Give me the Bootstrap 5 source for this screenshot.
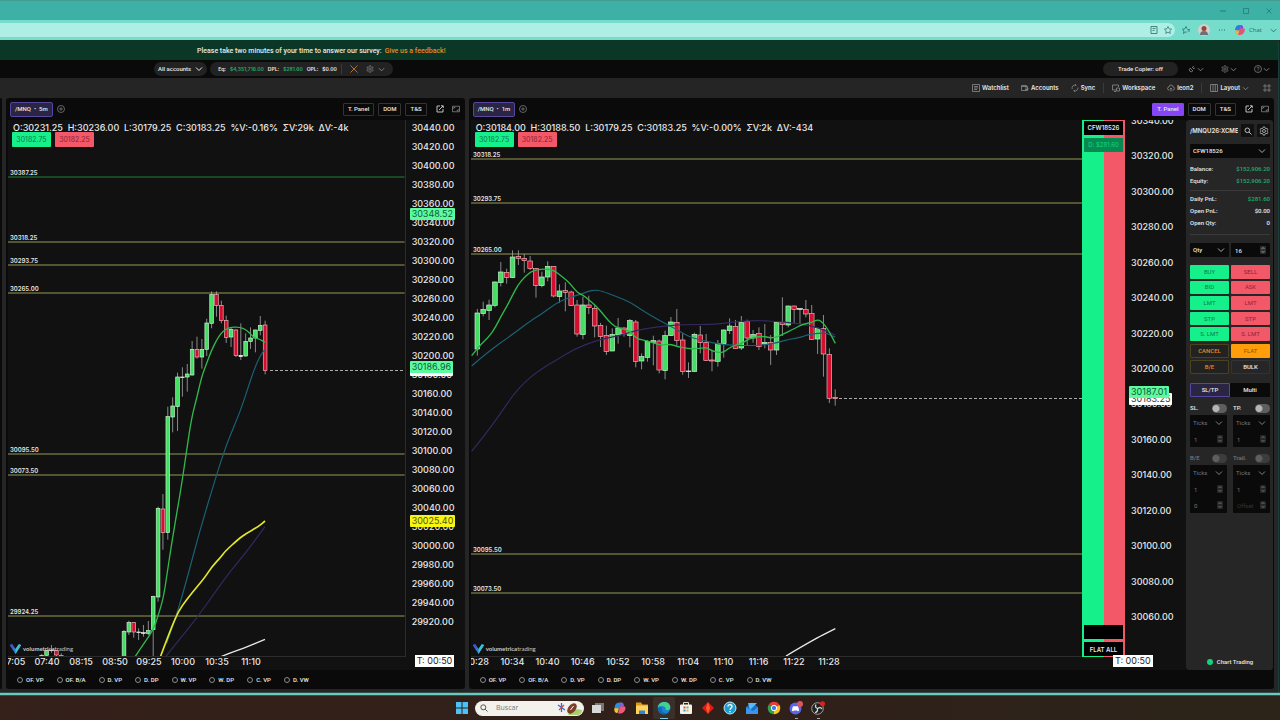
<!DOCTYPE html>
<html lang="en">
<head>
<meta charset="utf-8">
<meta name="viewport" content="width=device-width, initial-scale=1">
<title>Chart Trading</title>
<link href="https://cdn.jsdelivr.net/npm/bootstrap@5.3.0/dist/css/bootstrap.min.css" rel="stylesheet">
<style>
  :root { --sm: 6px; --lg: 9px; --ink: #e8e8e8; --panel: #0a0a0a; --up: #16f08b; --down: #f25868; }
  body { font-family: Inter, "Liberation Sans", sans-serif; font-size: var(--sm); line-height: 8px; font-weight: 600; color: var(--ink); background: #2e2019; }
  button, input, select { font: inherit; color: inherit; }
  svg { display: block; flex: none; fill: none; stroke: currentColor; }
  ul { list-style: none; margin: 0; padding: 0; }
  .i8 { width: 8px; height: 8px; } .i10 { width: 10px; height: 10px; } .i16 { width: 14px; height: 14px; stroke: none; }
  .chev { width: 7px; height: 7px; }
  .bare { border: 0; background: none; padding: 0; display: flex; align-items: center; white-space: nowrap; }
  .survey, .accounts, .pane-head, .studies, .ticket { font-family: Roboto, "Liberation Sans", sans-serif; font-weight: 500; }

  .titlebar { height: 20px; background: #3db1a6; border-top: 1px solid #469c92; color: #2a7a72; padding-right: 7px; gap: 15px; }
  .addressbar { height: 20px; background: #76dccb; color: #2c6a66; padding-right: 3px; gap: 7px; }
  .address { height: 14px; background: #aeeee5; border-radius: 0 7px 7px 0; padding-right: 3px; gap: 6px; }
  .address input { border: 0; background: none; outline: 0; height: 12px; min-width: 0; }
  .browser-actions { gap: 8px; }
  .chat { font: 6px/10px "Open Sans", sans-serif; gap: 3px; }
  .avatar { width: 12px; height: 12px; stroke: none; }

  .app { background: #252525; margin-right: 1px; border-right: 1px solid #1a3f3a; border-top-right-radius: 3px; overflow: hidden; }
  .survey { height: 20px; background: #0b3826; padding: 2px 0 0 197px; gap: 3px; font-size: 7px; }
  .survey a { color: #e58a24; text-decoration: none; }
  .accounts { height: 18px; background: var(--panel); padding: 0 8px 0 154px; gap: 3px; }
  .pill { height: 14px; background: #222; border-radius: 7px; color: var(--ink); padding: 0 4px; }
  .totals { padding: 0 8px; gap: 4px; font: 600 5px/8px Inter, sans-serif; }
  .copier { padding: 0 15px; }
  .menus { gap: 17px; margin-left: 7px; } .menus .bare { gap: 1px; }
  .gain { color: #1fae6c; }
  .orange { color: #c07a2a; }
  .tools { height: 20px; gap: 8px; padding-right: 7px; }
  .tools .bare { gap: 2px; }
  .tools .fit { margin-left: 6px; }
  .rule { width: 1px; height: 10px; background: #3a3a3a; }
  .muted { color: #8b8b8b; }

  .work { gap: 4px; padding: 0 4px 3px 0; }
  .pane { background: var(--panel); border-radius: 3px; overflow: hidden; min-width: 0; }
  .sliver { width: 2px; }
  .pane-left { flex: 0 0 36%; }
  .pane-head { height: 22px; padding: 0 5px 0 4px; gap: 4px; }
  .pop { margin-left: 5px; }
  .symbol { height: 15px; border: 1px solid #5646a0; border-radius: 2px; background: #2a2542; color: var(--ink); padding: 0 4px; }
  .tag { height: 13px; border: 1px solid #333; border-radius: 1px; background: #0a0a0a; color: var(--ink); padding: 0 4px; }
  .tag.on { background: #8547f5; border-color: #8547f5; }

  .chart { display: grid; grid-template-columns: minmax(0,1fr) auto auto; grid-template-rows: minmax(537px,1fr) 13px; background: #111; margin-left: 2px; min-width: 0; }
  .plot { position: relative; border-bottom: 1px solid #2c2c2c; overflow: hidden; }
  .plot > svg { position: absolute; inset: 0; width: 100%; height: 100%; }
  .plot text { fill: #e4e4e4; stroke: none; font-size: var(--sm); font-weight: 600; }
  .quote { position: absolute; top: 2px; left: 5px; font-size: var(--lg); line-height: 11px; font-weight: 500; white-space: pre; }
  .bidask { position: absolute; top: 12px; left: 4px; gap: 4px; font-size: 7px; font-weight: 400; }
  .bidask button { border: 0; border-radius: 1px; height: 15px; width: 39px; padding: 0; }
  .bid { background: var(--up); color: #0b7a48; } .ask { background: var(--down); color: #8c2433; }
  .brand { position: absolute; left: 1px; bottom: 1px; gap: 1px; font-family: Lato, sans-serif; font-size: var(--sm); color: #c9c9c9; font-weight: 400; }
  .axis { position: relative; border-left: 1px solid #2c2c2c; font-size: var(--lg); font-weight: 500; overflow: hidden; }
  .axis li { flex: 1; display: flex; align-items: center; padding-left: 6px; }
  .axis-left { width: 60px; } .axis-left ul { height: 513px; margin-top: -2px; }
  .axis-right { width: 61px; } .axis-right ul { height: 532px; margin-top: -17px; }
  .price { position: absolute; left: 4px; padding: 0 2px; height: 12px; line-height: 12px; border-radius: 1px; font-weight: 400; background: #5dfba0; color: #0c5c34; }
  .price.last { background: #fff; color: #333; } .price.avg { background: #f6f615; color: #55550a; }
  .times { grid-column: 1 / span 2; overflow: hidden; font-size: var(--lg); font-weight: 500; line-height: 9px; }
  .times ul { display: grid; grid-auto-flow: column; grid-auto-columns: 1fr; text-align: center; }
  .times-left ul { width: 272px; margin-left: -12px; } .times-right ul { width: 387px; margin-left: -11px; }
  .clock-cell { position: relative; grid-column: 3; }
  .clock { position: absolute; top: -2px; left: 10px; background: #fff; color: #222; font-size: var(--lg); font-weight: 400; line-height: 12px; padding: 0 2px; white-space: nowrap; }
  .times-right + .clock-cell .clock { left: -12px; }
  .strip { width: 43px; background: linear-gradient(90deg, var(--up) 50%, var(--down) 50%); padding: 1px 2px; gap: 3px; text-align: center; }
  .strip > * { background: #000; border: 0; height: 14px; line-height: 13px; padding: 0; display: block; color: var(--ink); white-space: nowrap; }
  .strip .day { background: #078a50; color: #15d882; font-weight: 400; }
  .studies { height: 19px; padding-left: 11px; gap: 13px; }
  .studies label { display: flex; align-items: center; gap: 3px; white-space: nowrap; }
  .studies input { appearance: none; width: 6px; height: 6px; margin: 0; border: 1px solid #8a8a8a; border-radius: 50%; }

  .ticket { width: 87px; background: #262626; border-radius: 3px; margin-right: 1px; padding: 4px 3px 4px 4px; }
  .ticket .btn2 { border: 0; border-radius: 1px; height: 14px; padding: 0; background: #161616; }
  .ticket-head { margin-bottom: 7px; gap: 3px; }
  .sq { width: 13px; height: 13px; padding: 0; border: 0; background: #111; border-radius: 1px; display: grid; place-items: center; color: #bbb; flex: none; }
  .sym { font: 600 6px/8px Inter, sans-serif; white-space: nowrap; overflow: hidden; }
  .pick { appearance: none; border: 0; border-radius: 1px; height: 14px; width: 100%; padding: 0 3px; min-width: 0; background: #0a0a0a url("data:image/svg+xml,%3Csvg xmlns='http://www.w3.org/2000/svg' viewBox='0 0 8 8'%3E%3Cpath d='M1 2.5 4 5.5 7 2.5' fill='none' stroke='%23bbb' stroke-width='.9'/%3E%3C/svg%3E") no-repeat right 4px center / 8px 8px; }
  .num { appearance: textfield; border: 0; border-radius: 1px; height: 14px; width: 100%; min-width: 0; padding: 0 4px; background: #0a0a0a url("data:image/svg+xml,%3Csvg xmlns='http://www.w3.org/2000/svg' viewBox='0 0 6 8'%3E%3Crect width='6' height='8' rx='1' fill='%23303030'/%3E%3Cpath d='M1.5 3 3 1.5 4.5 3M1.5 5 3 6.5 4.5 5' fill='none' stroke='%23aaa' stroke-width='.8'/%3E%3C/svg%3E") no-repeat right 4px center / 6px 8px; }
  .num::-webkit-inner-spin-button { display: none; }
  .num::placeholder { color: #444; opacity: 1; }
  .two { display: grid; grid-template-columns: 1fr 1fr; gap: 2px; }
  .facts { border-bottom: 1px solid #3a3a3a; margin: 0; padding: 5px 0 3px; }
  .facts + .facts { padding: 2px 0 5px; }
  .facts > div { display: flex; justify-content: space-between; height: 12px; align-items: center; }
  .facts dt, .facts dd { margin: 0; font-weight: 500; }
  .orders { height: 76px; grid-auto-rows: 1fr; } .ticket .orders .btn2 { height: auto; }
  .exits { margin-top: 3px; }
  .modes { margin-top: 9px; gap: 0; }
  .ticket .buy { background: var(--up); color: #0b7a48; font-weight: 400; }
  .ticket .sell { background: var(--down); color: #8c2433; font-weight: 400; }
  .ticket .flat { background: #ff9d0a; color: #8a5300; font-weight: 400; }
  .ticket .line { border: 1px solid #4a431d; background: #222; color: #e58a24; }
  .ticket .bulk { border: 1px solid #333; background: #262626; }
  .ticket .sltp { border: 1px solid #5646a0; background: #2a2542; }
  .ticket .multi { background: #0a0a0a; }
  .sets { column-gap: 6px; margin-top: 6px; }
  .box { background: #0a0a0a; border-radius: 1px; color: #999; }
  .box .pick, .box .num { display: block; height: 16px; background-color: transparent; font-weight: 400; opacity: .75; }
  .switch { display: flex; justify-content: space-between; align-items: center; height: 10px; margin: 0; }
  .switch input { appearance: none; width: 15px; height: 9px; margin: 0; border-radius: 5px; background: radial-gradient(circle at 4px 50%, #b5b5b5 3px, transparent 4px) #5e5e5e; }
  .switch.off { color: #777; } .switch.off input { background: radial-gradient(circle at 4px 50%, #5e5e5e 3px, transparent 4px) #3c3c3c; }
  .dot { width: 6px; height: 6px; border-radius: 50%; background: #16d07c; }

  .edge { height: 4px; background: #6cc9bd; border-top: 1px solid #2e4e4b; border-bottom: 1px solid #35504b; }
  .taskbar { height: 24px; padding-left: 3px; background: linear-gradient(90deg, #35201a, #2f2019 60%, #2c2419); }
  .taskbar button { position: relative; width: 22px; height: 22px; border: 0; padding: 0; background: none; display: grid; place-items: center; }
  .taskbar .start { width: 16px; }
  .taskbar .open::after { content: ""; position: absolute; bottom: 0; width: 3px; height: 1px; background: #aaa; }
  .taskbar .active { background: #3b3029; border-radius: 2px; } .taskbar .active::after { width: 8px; background: #7fd0e8; }
  .find { width: 109px; height: 15px; background: #f3f1ec; border-radius: 8px; color: #555; padding: 0 2px 0 5px; margin: 0 3px 0 5px; }
  .find input { border: 0; background: none; outline: 0; min-width: 0; font: 7px/10px "Open Sans", sans-serif; padding: 0; }
  .find input::placeholder { color: #777; opacity: 1; }
  .football { width: 25px; height: 13px; stroke: none; }
</style>
</head>
<body>
<svg width="0" height="0" class="position-absolute" aria-hidden="true">
  <symbol id="down" viewBox="0 0 8 8"><path d="M1 2.5 4 5.5 7 2.5"/></symbol>
  <symbol id="gear" viewBox="0 0 16 16"><path d="M6.8 1.5h2.4l.5 1.9 1.6.9 1.9-.5 1.2 2.1-1.4 1.3v1.7l1.4 1.3-1.2 2.1-1.9-.5-1.6.9-.5 1.9H6.800l-.5-1.900-1.600-.9-1.900.5-1.200-2.100L3 8.900V7.200L1.600 5.900l1.200-2.100 1.900.5 1.600-.9z" stroke-width="1.300"/><circle cx="8" cy="8" r="2.400" stroke-width="1.300"/></symbol>
  <symbol id="plus" viewBox="0 0 16 16"><circle cx="8" cy="8" r="7" stroke-width="1.400"/><path d="M8 4.500v7M4.500 8h7" stroke-width="1.400"/></symbol>
  <symbol id="pop" viewBox="0 0 16 16"><path d="M8 2H2v12h12V8M6 10l8-8M10 1.500h4.500V6" stroke-width="1.600"/></symbol>
  <symbol id="full" viewBox="0 0 16 16"><path d="M1 2.500h14v11H1zM3.500 8V5h3M12.500 8v3h-3" stroke-width="1.500"/></symbol>
  <symbol id="vlogo" viewBox="0 0 16 14"><path d="M1 2l3-1 4 6 4-6 3 1-7 11z" fill="#2d7fd0" stroke="none"/><path d="M12 1l3 1-7 11V7z" fill="#3fc0d0" stroke="none"/><path d="M1 2l3-1 2.500 4-2 2.500z" fill="#4656c8" stroke="none"/></symbol>
</svg>

<div class="d-flex flex-column min-vh-100">
  <div class="titlebar d-flex justify-content-end align-items-center">
    <button class="bare" aria-label="Minimize"><svg class="i8" viewBox="0 0 8 8"><path d="M1 4h6"/></svg></button>
    <button class="bare" aria-label="Maximize"><svg class="i8" viewBox="0 0 8 8"><path d="M1.500 1.500h5v5h-5z" stroke-width=".8"/></svg></button>
    <button class="bare" aria-label="Close"><svg class="i8" viewBox="0 0 8 8"><path d="M1.500 1.500l5 5M6.500 1.500l-5 5" stroke-width=".8"/></svg></button>
  </div>
  <div class="addressbar d-flex align-items-center">
    <div class="address d-flex flex-grow-1 align-items-center">
      <input class="flex-grow-1" aria-label="Address">
      <svg class="i8" viewBox="0 0 8 8"><path d="M1 .5h6v7H1zM2.500 2.500h3M2.500 4.500h2" stroke-width=".8"/></svg>
      <svg class="i8" viewBox="0 0 16 16"><path d="M8 1l2.200 4.600 5 .7-3.600 3.500.9 5L8 12.500 3.500 14.800l.9-5L.8 6.300l5-.7z" stroke-width="1.400"/></svg>
    </div>
    <div class="browser-actions d-flex align-items-center">
      <svg class="i8" viewBox="0 0 16 16"><path d="M9.500 12.500 7 12l-4 3 .9-5L.8 6.300l5-.7L8 1l2.200 4.600M11 7h5M11 10h5" stroke-width="1.500"/></svg>
      <svg class="avatar" viewBox="0 0 12 12"><circle cx="6" cy="6" r="6" fill="#d8cfc8"/><circle cx="6" cy="4.500" r="2.500" fill="#8a4a42"/><path d="M2 11a4 4 0 0 1 8 0" fill="#6c6f78"/></svg>
      <svg class="i8" viewBox="0 0 8 8"><path d="M1 4h1M3.500 4h1M6 4h1" stroke-width="1.200"/></svg>
      <button class="bare chat"><svg class="avatar" viewBox="0 0 12 12"><path d="M1 5.500C2 1 4 .8 7 1L5.500 6.500 3 8z" fill="#2b7de0"/><path d="M6.500 1C9 .8 9 3 9.500 4.500L6 5z" fill="#7a4be0"/><path d="M6 4.500h4.500c1 1.500-.5 6.500-4.500 6.500H4z" fill="#e8507a"/><path d="M1 6l4 .5L4 10.500C2 10.500.5 9 1 6z" fill="#f0b030"/></svg>Chat</button>
      <svg class="chev" viewBox="0 0 8 8"><use href="#down"/></svg>
    </div>
  </div>

  <div class="app d-flex flex-column flex-grow-1">
    <div class="survey d-flex align-items-center"><span>Please take two minutes of your time to answer our survey:</span><a href="#">Give us a feedback!</a></div>

    <div class="accounts d-flex align-items-center">
      <button class="bare pill">All accounts <svg class="i8 ms-1"><use href="#down"/></svg></button>
      <div class="pill totals d-flex align-items-center">
        <span>Eq:</span><span class="gain">$4,351,716.00</span><span>DPL:</span><span class="gain">$281.60</span><span>OPL:</span><span>$0.00</span>
        <span class="rule"></span>
        <button class="bare orange ms-1" aria-label="Close all"><svg class="i8" viewBox="0 0 8 8"><path d="M.5 .5l7 7M7.500 .5l-7 7" stroke-width=".9"/></svg></button>
        <button class="bare muted ms-1" aria-label="Account settings"><svg class="i8"><use href="#gear"/></svg><svg class="chev ms-1"><use href="#down"/></svg></button>
      </div>
      <button class="bare pill copier ms-auto">Trade Copier: off</button>
      <div class="menus d-flex muted">
        <button class="bare" aria-label="Connection"><svg class="i8" viewBox="0 0 8 8"><path d="M2 3l3 3M1.500 3.500a2.200 2.200 0 0 0 3 3M4 2l2 2M5 1l.5 1M7 3l-1 .3" stroke-width=".8"/></svg><svg class="chev"><use href="#down"/></svg></button>
        <button class="bare" aria-label="Settings"><svg class="i8"><use href="#gear"/></svg><svg class="chev"><use href="#down"/></svg></button>
        <button class="bare" aria-label="Help"><svg class="i8" viewBox="0 0 16 16"><circle cx="8" cy="8" r="7" stroke-width="1.400"/><path d="M6 6.500C6 3.500 10.300 4 10 6.500 9.800 8 8 8 8 9.500M8 11v1.300" stroke-width="1.400"/></svg><svg class="chev"><use href="#down"/></svg></button>
      </div>
    </div>

    <div class="tools d-flex justify-content-end align-items-center">
      <button class="bare"><svg class="i8 muted" viewBox="0 0 8 8"><path d="M.5 .5h7v7h-7zM2 2.500h4M2 4h4M2 5.500h3" stroke-width=".8"/></svg>Watchlist</button>
      <button class="bare ms-1"><svg class="i8 muted" viewBox="0 0 8 8"><path d="M.5 1.500h5v1.500M.5 1.500v5h6v-4h-6M4 4h3v1.500H4" stroke-width=".8"/></svg>Accounts</button>
      <button class="bare ms-1"><svg class="i8 muted" viewBox="0 0 8 8"><path d="M1.200 5A3 3 0 0 1 5 1.200M7 3.500A3 3 0 0 1 3 6.800M4 .3l1.200.9-1 1M4 7.700l-1.200-.9 1-1" stroke-width=".8"/></svg>Sync</button>
      <span class="rule"></span>
      <button class="bare"><svg class="i8 muted" viewBox="0 0 8 8"><path d="M5 6H.5V1h6v2M2 7.500h2M4.500 4h3v3h-3z" stroke-width=".8"/></svg>Workspace</button>
      <button class="bare ms-1"><svg class="i8 muted" viewBox="0 0 8 8"><path d="M2.500 6H2a1.500 1.500 0 0 1 0-3 2 2 0 0 1 4 0 1.500 1.500 0 0 1 0 3h-.5M4 7.500V4M3 5l1-1 1 1" stroke-width=".8"/></svg>leon2</button>
      <span class="rule"></span>
      <button class="bare"><svg class="i8 muted" viewBox="0 0 8 8"><path d="M.5 .5h7v7h-7zM3 .5v7M5.300 .5v7" stroke-width=".8"/></svg>Layout <svg class="chev muted"><use href="#down"/></svg></button>
      <button class="bare muted fit" aria-label="Fit"><svg class="i8" viewBox="0 0 8 8"><path d="M2 0v8M6 0v8M0 2h2M6 2h2M0 6h2M6 6h2M2 2h4M2 6h4" stroke-width=".7"/></svg></button>
    </div>

    <div class="work d-flex flex-grow-1">
      <div class="pane sliver"></div>
      <section class="pane pane-left d-flex flex-column">
        <div class="pane-head d-flex align-items-center">
          <button class="symbol">/MNQ &nbsp;•&nbsp; 5m</button>
          <button class="bare muted" aria-label="Add"><svg class="i8"><use href="#plus"/></svg></button>
          <button class="tag ms-auto">T. Panel</button><button class="tag">DOM</button><button class="tag">T&amp;S</button>
          <button class="bare pop" aria-label="Pop out"><svg class="i8"><use href="#pop"/></svg></button>
          <button class="bare ms-1 muted" aria-label="Maximize"><svg class="i8"><use href="#full"/></svg></button>
        </div>
        <div class="chart flex-grow-1">
          <div class="plot">
            <svg id="five"></svg>
            <div class="quote">O:30231.25  H:30236.00  L:30179.25  C:30183.25  %V:-0.16%  ΣV:29k  ΔV:-4k</div>
            <div class="bidask d-flex"><button class="bid">30182.75</button><button class="ask">30182.25</button></div>
            <div class="brand d-flex align-items-center"><svg width="13" height="12"><use href="#vlogo"/></svg><span><b>volumetrica</b>trading</span></div>
          </div>
          <div></div>
          <div class="axis axis-left">
            <ul id="prices5" class="d-flex flex-column"></ul>
            <span class="price" style="top:88px">30348.52</span>
            <span class="price last" style="top:244px">30183.25</span><span class="price" style="top:241px">30186.96</span>
            <span class="price avg" style="top:395px">30025.40</span>
          </div>
          <div class="times times-left"><ul><li>07:05</li><li>07:40</li><li>08:15</li><li>08:50</li><li>09:25</li><li>10:00</li><li>10:35</li><li>11:10</li></ul></div>
          <div class="clock-cell"><span class="clock">T: 00:50</span></div>
        </div>
        <div class="studies d-flex align-items-center"></div>
      </section>

      <section class="pane d-flex flex-column flex-grow-1">
        <div class="pane-head d-flex align-items-center">
          <button class="symbol">/MNQ &nbsp;•&nbsp; 1m</button>
          <button class="bare muted" aria-label="Add"><svg class="i8"><use href="#plus"/></svg></button>
          <button class="tag on ms-auto">T. Panel</button><button class="tag">DOM</button><button class="tag">T&amp;S</button>
          <button class="bare pop" aria-label="Pop out"><svg class="i8"><use href="#pop"/></svg></button>
          <button class="bare ms-1 muted" aria-label="Maximize"><svg class="i8"><use href="#full"/></svg></button>
        </div>
        <div class="d-flex flex-grow-1">
          <div class="chart flex-grow-1">
            <div class="plot">
              <svg id="one"></svg>
              <div class="quote">O:30184.00  H:30188.50  L:30179.25  C:30183.25  %V:-0.00%  ΣV:2k  ΔV:-434</div>
              <div class="bidask d-flex"><button class="bid">30182.75</button><button class="ask">30182.25</button></div>
              <div class="brand d-flex align-items-center"><svg width="13" height="12"><use href="#vlogo"/></svg><span><b>volumetrica</b>trading</span></div>
            </div>
            <div class="strip d-flex flex-column"><span>CFW18526</span><span class="day">D: $281.60</span><span class="mt-auto"></span><button>FLAT ALL</button></div>
            <div class="axis axis-right border-0">
              <ul id="prices1" class="d-flex flex-column"></ul>
              <span class="price last" style="top:273px">30183.25</span><span class="price" style="top:266px">30187.01</span>
            </div>
            <div class="times times-right"><ul><li>10:28</li><li>10:34</li><li>10:40</li><li>10:46</li><li>10:52</li><li>10:58</li><li>11:04</li><li>11:10</li><li>11:16</li><li>11:22</li><li>11:28</li></ul></div>
            <div class="clock-cell"><span class="clock">T: 00:50</span></div>
          </div>

          <form class="ticket d-flex flex-column">
            <div class="ticket-head d-flex align-items-center"><span class="sym flex-grow-1">/MNQU26:XCME</span>
              <button type="button" class="sq" aria-label="Search"><svg class="i8" viewBox="0 0 8 8"><circle cx="3.300" cy="3.300" r="2.300"/><path d="M5 5l2.500 2.500"/></svg></button>
              <button type="button" class="sq" aria-label="Ticket settings"><svg class="i10"><use href="#gear"/></svg></button></div>
            <select class="pick" aria-label="Account"><option>CFW18526</option></select>
            <dl class="facts"><div><dt>Balance:</dt><dd class="gain">$152,906.20</dd></div><div><dt>Equity:</dt><dd class="gain">$152,906.20</dd></div></dl>
            <dl class="facts mb-2"><div><dt>Daily PnL:</dt><dd class="gain">$281.60</dd></div><div><dt>Open PnL:</dt><dd>$0.00</dd></div><div><dt>Open Qty:</dt><dd>0</dd></div></dl>
            <div class="two mb-2"><select class="pick" aria-label="Quantity type"><option>Qty</option></select><input class="num" type="number" value="16" aria-label="Quantity"></div>
            <div class="two orders" id="orders"></div>
            <div class="two exits"><button type="button" class="btn2 line">CANCEL</button><button type="button" class="btn2 flat">FLAT</button><button type="button" class="btn2 line">B/E</button><button type="button" class="btn2 bulk">BULK</button></div>
            <div class="two modes"><button type="button" class="btn2 sltp">SL/TP</button><button type="button" class="btn2 multi">Multi</button></div>
            <div class="two sets">
              <label class="switch">SL.<input type="checkbox"></label><label class="switch">TP.<input type="checkbox"></label>
              <div class="box"><select class="pick" aria-label="SL unit"><option>Ticks</option></select><input class="num" type="number" value="1" aria-label="SL"></div>
              <div class="box"><select class="pick" aria-label="TP unit"><option>Ticks</option></select><input class="num" type="number" value="1" aria-label="TP"></div>
            </div>
            <div class="two sets">
              <label class="switch off">B/E<input type="checkbox"></label><label class="switch off">Trail.<input type="checkbox"></label>
              <div class="box"><select class="pick" aria-label="B/E unit"><option>Ticks</option></select><input class="num" type="number" value="1" aria-label="B/E"><input class="num" type="number" value="0" aria-label="B/E offset"></div>
              <div class="box"><select class="pick" aria-label="Trail unit"><option>Ticks</option></select><input class="num" type="number" value="1" aria-label="Trail"><input class="num" type="number" placeholder="Offset" aria-label="Trail offset"></div>
            </div>
            <div class="mt-auto d-flex align-items-center justify-content-center gap-1"><span class="dot"></span>Chart Trading</div>
          </form>
        </div>
        <div class="studies d-flex align-items-center"></div>
      </section>
    </div>
  </div>
  <div class="edge"></div>

  <nav class="taskbar d-flex justify-content-center align-items-center" aria-label="Taskbar">
    <button class="start" aria-label="Start"><svg class="i16" viewBox="0 0 14 14"><path d="M1 1h5.500v5.500H1zM7.500 1H13v5.500H7.500zM1 7.500h5.500V13H1zM7.500 7.500H13V13H7.500z" fill="#4cc2f5"/></svg></button>
    <label class="find d-flex align-items-center gap-2"><svg class="i8" viewBox="0 0 8 8"><circle cx="3.300" cy="3.300" r="2.500"/><path d="M5.200 5.200l2.300 2.300"/></svg><input placeholder="Buscar" class="flex-grow-1">
      <svg class="football" viewBox="0 0 25 13"><path d="M11 13q5-8 14-5v1q-1 4-5 4z" fill="#a9cf70"/><path d="M1 3l7 5M4.500 1v9" stroke="#2f6fd0" stroke-width="1.300"/><path d="M2 8l5-5" stroke="#e04040" stroke-width="1.300"/><ellipse cx="15" cy="6.500" rx="6" ry="3.700" transform="rotate(-50 15 6.500)" fill="#7a3f28"/><path d="M13.500 8l3-4" stroke="#fff"/></svg></label>
    <button aria-label="Task view"><svg class="i16" viewBox="0 0 14 14"><path d="M4 2h9v8H4z" fill="#777"/><path d="M1 4h9v8H1z" fill="#d8d8d8"/></svg></button>
    <button aria-label="Copilot"><svg class="i16" viewBox="0 0 14 14"><path d="M1.500 6.500C2.500 2 4 1.500 8.500 1.500L7 7 3.500 8.500z" fill="#2b8de0"/><path d="M8 1.500c3 0 2.500 2.500 3.500 4L7 6z" fill="#8a5be8"/><path d="M7 5.500h5c1.500 1.500-.5 7-4.500 7H5z" fill="#ee5a78"/><path d="M1.500 7 6 7.500 4.500 12C2 12 .8 10 1.500 7z" fill="#f0c040"/></svg></button>
    <button aria-label="File Explorer"><svg class="i16" viewBox="0 0 14 14"><path d="M1 1.500h5l1.500 2H13V6H1z" fill="#d99a1c"/><path d="M1 4.500h12V13H1z" fill="#ffd35a"/><path d="M4 9.500h6V13H4z" fill="#2f86d8"/></svg></button>
    <button class="open active" aria-label="Edge"><svg class="i16" viewBox="0 0 14 14"><circle cx="7" cy="7" r="6.300" fill="#1587d0"/><path d="M1 6C2-.5 13-.8 13.300 6.500c0 2.500-3 3.200-4.800 2.200C10 6 5 3.500 1 6z" fill="#45d090"/><path d="M5 7c-1.500 3 2 6 6 4.500-4 3.500-10 1.500-10-4C2 6 4 6 5 7z" fill="#1565b8"/></svg></button>
    <button aria-label="Store"><svg class="i16" viewBox="0 0 14 14"><path d="M4.500 4V1.500h5V4" fill="none" stroke="#ddd"/><rect x="1" y="3.500" width="12" height="9.500" rx="1" fill="#f2f2f2"/><path d="M4.500 5.500h2v2h-2z" fill="#e5532d"/><path d="M7.500 5.500h2v2h-2z" fill="#7ab82e"/><path d="M4.500 8.500h2v2h-2z" fill="#2f9be0"/><path d="M7.500 8.500h2v2h-2z" fill="#f5b51c"/></svg></button>
    <button aria-label="Trader"><svg class="i16" viewBox="0 0 14 14"><path d="M7 1l6 6-6 6-6-6z" fill="#e01818"/><path d="M7 1l2 6-2 6-2-6z" fill="#ff5a2a"/></svg></button>
    <button aria-label="Help"><svg class="i16" viewBox="0 0 14 14"><circle cx="7" cy="7" r="6" fill="#1f9fd0" stroke="#bfe8f5"/><path d="M5 5.500C5 3 9.200 3 9 5.500 8.900 7 7 7 7 8.800M7 10v1.300" fill="none" stroke="#fff" stroke-width="1.400"/></svg></button>
    <button aria-label="Mail"><svg class="i16" viewBox="0 0 14 14"><path d="M1 6l6-4.500L13 6v7H1z" fill="#1670c8"/><path d="M3 2h9L5 9z" fill="#59b8f5"/><path d="M1 6l7 4 5-4v7H1z" fill="#3b95ea"/></svg></button>
    <button aria-label="Chrome"><svg class="i16" viewBox="0 0 14 14"><path d="M7 7 1.500 4A6.200 6.200 0 0 1 12.500 4z" fill="#e5402f"/><path d="M7 7 12.500 4A6.200 6.200 0 0 1 7 13.200z" fill="#fbc41b"/><path d="M7 7v6.200A6.200 6.200 0 0 1 1.500 4z" fill="#31a350"/><circle cx="7" cy="7" r="2.700" fill="#3f80f0" stroke="#fff"/></svg></button>
    <button class="open" aria-label="Discord"><svg class="i16" viewBox="0 0 14 14"><circle cx="6.500" cy="7.500" r="6" fill="#5a65ea"/><path d="M3 9.800c.2-2.500.6-4 1.300-4.500h4.400c.7.500 1.100 2 1.300 4.500-1 .8-1.500.5-2-.2H5c-.5.700-1 1-2 .2z" fill="#fff"/><circle cx="11" cy="3" r="3" fill="#e0555f"/></svg></button>
    <button class="open" aria-label="OBS"><svg class="i16" viewBox="0 0 14 14"><circle cx="6.500" cy="7.500" r="5.800" fill="#222" stroke="#bbb" stroke-width=".8"/><path d="M6.500 7.500q-3-1-1.500-4M6.500 7.500q3-2 4.500.5M6.500 7.500q.5 3.500-2.500 4" fill="none" stroke="#ddd" stroke-width="1.200"/><circle cx="11.500" cy="2.800" r="2.500" fill="#e02020"/></svg></button>
  </nav>
</div>

<script src="https://cdn.jsdelivr.net/npm/bootstrap@5.3.0/dist/js/bootstrap.bundle.min.js"></script>
<script>
  // Candles are [high, body top, body bottom, low, colour]; all plot units are thirds of a pixel.
  const PAINT = { g: ['#45de65', '#c9f5cf'], r: ['#d20f2e', '#f2b3b8'], w: ['#eee', '#eee'] };

  function candles(list, x0, step, width) {
    return list.map(([hi, top, bottom, lo, kind], i) => {
      const x = x0 + step * i, [fill, edge] = PAINT[kind];
      return `<path d="M${x} ${hi}V${lo}" stroke="#aaa" stroke-width="2.4"/>` +
        `<rect x="${x - width / 2}" y="${top}" width="${width}" height="${Math.max(1, bottom - top)}" fill="${fill}" stroke="${edge}" stroke-width="2"/>`;
    }).join('');
  }
  // Smooths a list of points through their midpoints.
  function curve(points, colour, width) {
    let d = `M${points[0]} ${points[1]}`;
    for (let i = 2; i < points.length - 2; i += 2)
      d += `Q${points[i]} ${points[i + 1]} ${(points[i] + points[i + 2]) / 2} ${(points[i + 1] + points[i + 3]) / 2}`;
    d += `L${points[points.length - 2]} ${points[points.length - 1]}`;
    return `<path d="${d}" stroke="${colour}" stroke-width="${width}"/>`;
  }
  function levels(list) {
    return list.map(([y, name, colour]) => `<line x1="0" x2="100%" y1="${y}" y2="${y}" stroke="${colour || '#979a55'}"/><text x="2" y="${y - 2}">${name}</text>`).join('');
  }

  document.getElementById('five').innerHTML =
    levels([[57, '30387.25', '#23803a'], [122, '30318.25'], [145, '30293.75'], [173, '30265.00'], [334, '30095.50'], [355, '30073.50'], [496, '29924.25']]) +
    '<line x1="262" x2="100%" y1="250.5" y2="250.5" stroke="#aaa" stroke-dasharray="3 2"/>' +
    '<g transform="translate(-8 160) scale(.33333)">' +
    candles([[1122,1126,1132,1132,'g'],[1110,1112,1126,1128,'g'],[1095,1110,1112,1118,'w'],[1110,1112,1125,1130,'r'],[1120,1127,1131,1131,'r']], 125, 14.7, 11) +
    candles([[1050,1054,1133,1133,'g'],[1022,1028,1056,1065,'g'],[1027,1028,1056,1073,'r'],[1045,1056,1058,1080,'w'],[1035,1058,1060,1070,'w'],[1023,1052,1060,1065,'g'],[947,949,1049,1130,'g'],[680,685,951,965,'g'],[642,687,758,809,'r'],
      [380,410,758,779,'g'],[352,378,411,457,'g'],[278,291,380,453,'g'],[262,291,293,350,'w'],[252,282,291,335,'g'],[183,208,285,287,'g'],[170,208,231,236,'r'],[177,208,231,266,'g'],[116,129,208,228,'g'],[34,44,130,145,'g'],[34,44,76,110,'r'],[62,76,122,130,'r'],[107,121,172,189,'r'],[142,148,171,201,'g'],[148,150,227,231,'r'],[130,226,230,240,'w'],[160,184,228,230,'g'],[142,174,184,207,'g'],[149,150,174,217,'g'],[108,136,151,166,'g'],[122,135,272,283,'r']], 372, 14.6, 11) +
    curve([496,1131,545,1070,595,1008,650,930,690,875,740,815,795,740], '#33295f', 3.5) +
    curve([500,1090,530,1005,560,900,600,750,645,600,680,490,721,395,750,305,765,262,780,228,795,208], '#1a6275', 3.5) +
    curve([404,1132,432,1090,460,1050,475,1005,490,955,500,890,515,790,532,690,547,600,560,510,575,412,590,355,605,290,620,250,634,212,650,180,663,160,677,148,695,141,720,142,737,148,752,163,765,174,780,178,795,187], '#30b84c', 4) +
    curve([481,1131,500,1080,527,1012,545,978,575,940,615,892,635,861,662,832,677,812,715,778,737,761,775,740,795,723], '#e2e62c', 5) +
    curve([663,1130,690,1119,730,1105,795,1078], '#e8e8e8', 4) + '</g>';

  document.getElementById('one').innerHTML =
    levels([[39, '30318.25'], [83, '30293.75'], [134, '30265.00'], [434, '30095.50'], [473, '30073.50']]) +
    '<line x1="368" x2="100%" y1="278.5" y2="278.5" stroke="#aaa" stroke-dasharray="3 2"/>' +
    '<g transform="translate(-6 120) scale(.33333)">' +
    candles([[207,219,327,347,'g'],[185,208,221,229,'g'],[179,195,212,240,'g'],[124,126,196,202,'g'],[66,96,128,139,'g'],[86,97,112,131,'r'],[31,51,113,113,'g'],[31,49,55,75,'r'],[42,55,62,98,'r'],[48,63,86,90,'r'],[84,86,137,173,'r'],[95,111,137,142,'g'],[64,79,111,124,'g'],[78,79,168,172,'r'],[133,153,170,188,'g'],[127,152,157,214,'r'],[152,156,196,198,'r'],[180,195,282,290,'r'],[170,195,284,298,'g'],[167,195,203,222,'r'],
      [195,205,258,292,'r'],[249,256,290,321,'r'],[257,286,335,345,'r'],[265,283,333,333,'g'],[234,264,285,311,'g'],[262,264,282,290,'r'],[237,242,287,322,'g'],[240,246,365,382,'r'],[340,350,363,388,'g'],[300,304,352,365,'g'],[287,302,308,376,'g'],[299,303,390,400,'r'],[272,287,392,418,'g'],[231,246,287,287,'g'],[207,247,301,316,'r'],[280,300,395,404,'r'],[367,393,395,414,'w'],[278,283,394,396,'g'],[258,285,308,340,'r'],[282,308,361,363,'r'],
      [330,360,363,394,'r'],[300,311,364,380,'g'],[268,270,311,353,'g'],[235,258,272,282,'g'],[240,260,326,327,'r'],[228,248,324,330,'g'],[239,244,294,317,'r'],[270,283,294,308,'g'],[262,281,320,330,'r'],[252,307,312,325,'g'],[285,308,330,375,'r'],[245,247,330,345,'g'],[172,248,254,288,'r'],[197,198,255,262,'g'],[197,198,208,252,'r'],[205,206,208,252,'w'],[180,209,222,232,'r'],[195,221,298,300,'r'],[262,266,297,342,'g'],[225,266,342,410,'r'],[325,343,475,489,'r'],[448,472,476,497,'r']], 37, 17.6, 14) +
    curve([20,634,80,560,140,470,180,425,220,393,270,362,330,326,390,303,430,293,470,285,510,272,560,263,600,258,650,254,760,253,800,246,870,241,930,244,1000,250,1060,262,1111,285], '#33295f', 3.5) +
    curve([20,378,70,335,140,285,200,240,230,222,270,192,310,173,350,162,370,154,390,150,410,153,450,168,495,186,530,210,580,240,630,265,670,290,700,298,730,305,760,312,800,316,870,317,910,313,940,307,970,298,1010,292,1030,283,1060,280,1085,279,1111,292], '#1a6275', 3.5) +
    curve([20,347,45,315,70,292,90,265,110,225,125,200,143,165,160,133,178,112,196,96,215,89,240,87,265,90,285,105,302,118,319,135,337,158,354,165,372,180,395,200,410,217,430,242,450,260,470,266,490,272,505,285,520,298,550,303,585,316,600,313,620,314,636,319,671,327,707,325,724,322,741,333,765,338,780,335,800,318,830,311,850,297,882,289,900,290,925,295,950,285,990,265,1010,254,1040,247,1060,238,1075,250,1090,270,1111,310], '#30b84c', 4) +
    curve([963,1248,1040,1202,1111,1166], '#e8e8e8', 4) + '</g>';

  const ladder = (id, from, to) => {
    let rows = '';
    for (let p = from; p >= to; p -= 20) rows += `<li>${p.toFixed(2)}</li>`;
    document.getElementById(id).innerHTML = rows;
  };
  ladder('prices5', 30440, 29920);
  ladder('prices1', 30340, 30060);

  document.getElementById('orders').innerHTML = [['BUY', 'SELL'], ['BID', 'ASK'], ['LMT', 'LMT'], ['STP', 'STP'], ['S. LMT', 'S. LMT']]
    .map(([b, s]) => `<button type="button" class="btn2 buy">${b}</button><button type="button" class="btn2 sell">${s}</button>`).join('');
  document.querySelectorAll('.studies').forEach(row => {
    row.innerHTML = ['OF. VP', 'OF. B/A', 'D. VP', 'D. DP', 'W. VP', 'W. DP', 'C. VP', 'D. VW'].map(n => `<label><input type="checkbox">${n}</label>`).join('');
  });
</script>
</body>
</html>
